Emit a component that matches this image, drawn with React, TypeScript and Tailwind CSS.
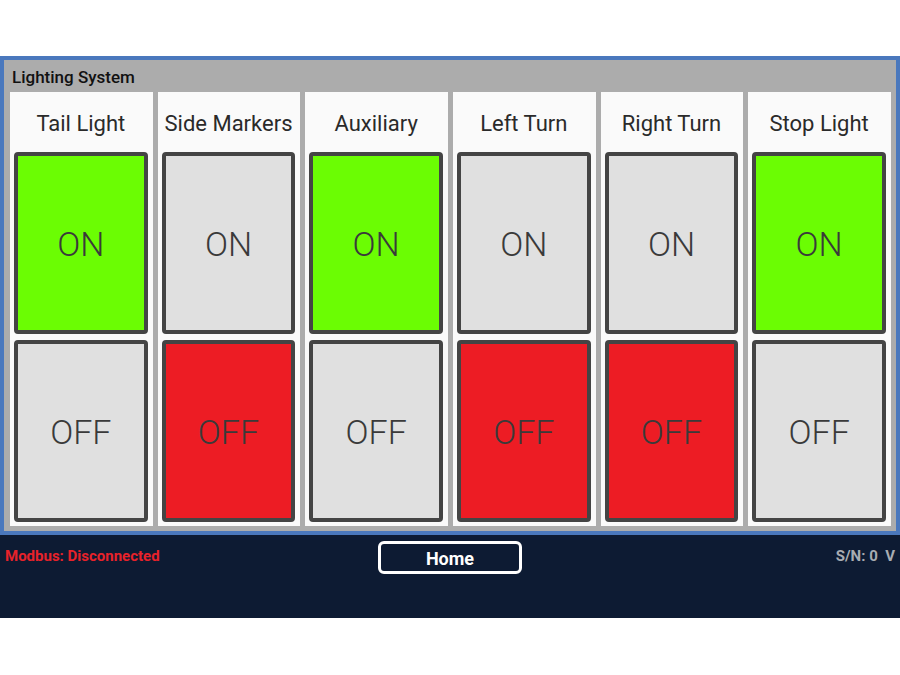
const lights = [
  {name: 'Tail Light', on: true},
  {name: 'Side Markers', on: false},
  {name: 'Auxiliary', on: true},
  {name: 'Left Turn', on: false},
  {name: 'Right Turn', on: false},
  {name: 'Stop Light', on: true},
];

function LightColumn({name, on}: {name: string; on: boolean}) {
  return (
    <div className="flex flex-col bg-[#fafafa] pl-[4px] pr-[5px] pb-[4px]">
      <div className="h-[60px] flex items-center justify-center text-[22px] text-[#2a2a2a] pt-[3px]">
        {name}
      </div>
      <div
        className={`h-[182px] flex items-center justify-center border-[4px] border-[#444] rounded-[4px] text-[34px] font-light text-[#3a3a3a] pt-[3px] ${
          on ? 'bg-[#6bfd03]' : 'bg-[#e0e0e0]'
        }`}
      >
        ON
      </div>
      <div
        className={`mt-[6px] h-[182px] flex items-center justify-center border-[4px] border-[#444] rounded-[4px] text-[34px] font-light text-[#3a3a3a] pt-[3px] ${
          on ? 'bg-[#e0e0e0]' : 'bg-[#ed1c24]'
        }`}
      >
        OFF
      </div>
    </div>
  );
}

export default function App() {
  return (
    <div className="w-[900px] h-[675px] bg-white flex flex-col font-['Roboto',_'Liberation_Sans',_sans-serif]">
      <div className="h-[56px]" />
      <div className="border-[4px] border-[#4a78bd] bg-[#acacac]">
        <div className="h-[32px] flex items-center pl-[8px] text-[17px] font-medium text-[#111] pt-[3px]">
          Lighting System
        </div>
        <div className="grid grid-cols-6 gap-[5px] pl-[6px] pr-[5px] pb-[5px]">
          {lights.map((l) => (
            <LightColumn key={l.name} name={l.name} on={l.on} />
          ))}
        </div>
      </div>
      <div className="h-[83px] bg-[#0d1b33] relative">
        <div className="absolute left-[5px] top-[10px] text-[15px] font-bold text-[#e8222a]">
          Modbus: Disconnected
        </div>
        <div className="flex justify-center pt-[6px]">
          <div className="w-[144px] h-[33px] border-[3px] border-white rounded-[6px] flex items-center justify-center text-white font-bold text-[18px] pt-[2px]">
            Home
          </div>
        </div>
        <div className="absolute right-[5px] top-[10px] text-[15px] font-bold text-[#a8acb2]">
          S/N: 0&nbsp;&nbsp;V
        </div>
      </div>
    </div>
  );
}
